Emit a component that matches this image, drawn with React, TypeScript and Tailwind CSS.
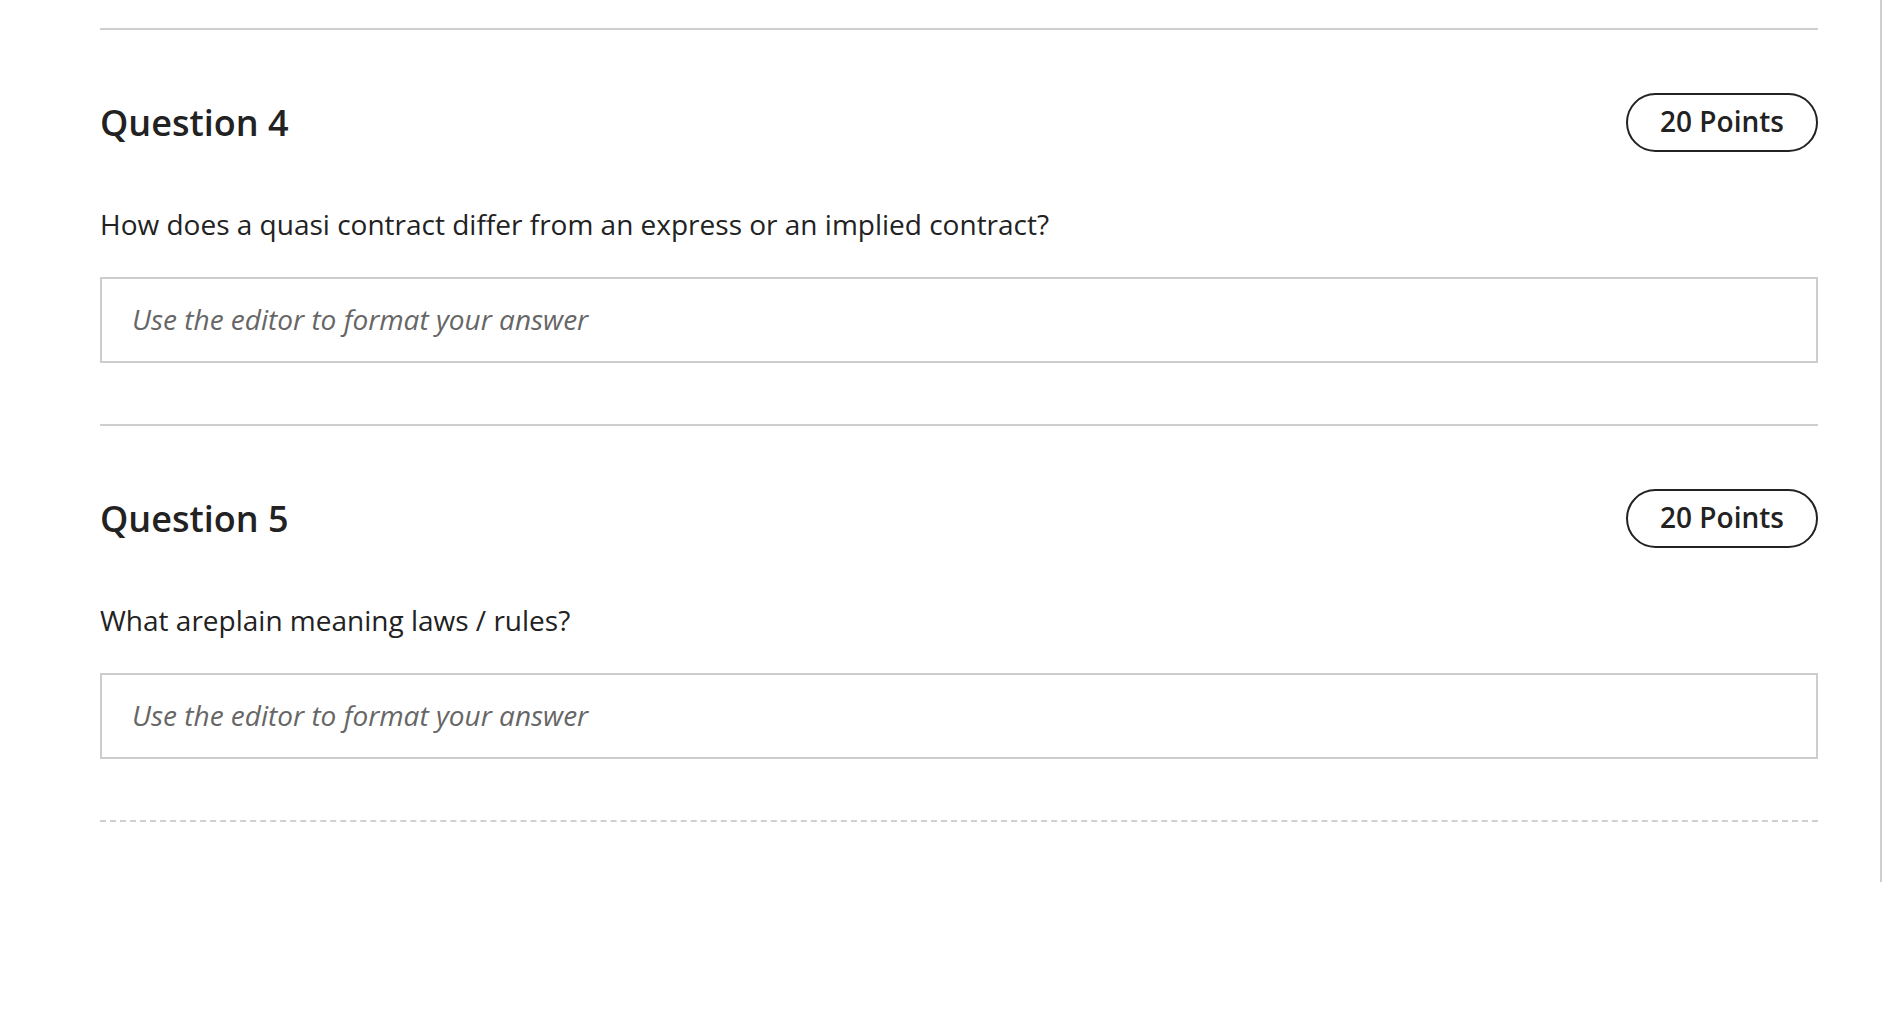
import React from 'react';

type Question = {
  number: number;
  points: number;
  prompt: string;
};

const QUESTIONS: Question[] = [
  {
    number: 4,
    points: 20,
    prompt: 'How does a quasi contract differ from an express or an implied contract?',
  },
  {
    number: 5,
    points: 20,
    prompt: 'What areplain meaning laws / rules?',
  },
];

function QuestionBlock({ q }: { q: Question }) {
  return (
    <section className="border-t-2 border-[#cfcfcf] pt-[63px] pb-[61px]">
      {/* Header */}
      <div className="flex items-center justify-between h-[59px]">
        <h2 className="text-[36px] font-semibold text-[#222] leading-none">Question {q.number}</h2>
        <span className="inline-flex items-center justify-center h-[59px] w-[192px] pb-[3px] rounded-full border-2 border-[#222] text-[28px] font-semibold text-[#222]">
          {q.points} Points
        </span>
      </div>

      <p className="mt-[52px] text-[28px] leading-[40px] text-[#222]">{q.prompt}</p>

      {/* Answer editor placeholder */}
      <div className="mt-[33px] h-[86px] border-2 border-[#cdcdcd] px-[30px] pb-[2px] flex items-center">
        <span className="italic text-[28px] text-[#666]">Use the editor to format your answer</span>
      </div>
    </section>
  );
}

export default function App() {
  return (
    <div className="min-h-screen bg-white font-['Open_Sans',sans-serif]">
      <div className="w-[1882px] h-[882px] border-r-2 border-[#cfcfcf]">
        <div className="pl-[100px] pr-[62px] pt-[28px]">
          {QUESTIONS.map((q) => (
            <QuestionBlock key={q.number} q={q} />
          ))}
          <div className="border-t-2 border-dashed border-[#d0d0d0]" />
        </div>
      </div>
    </div>
  );
}
